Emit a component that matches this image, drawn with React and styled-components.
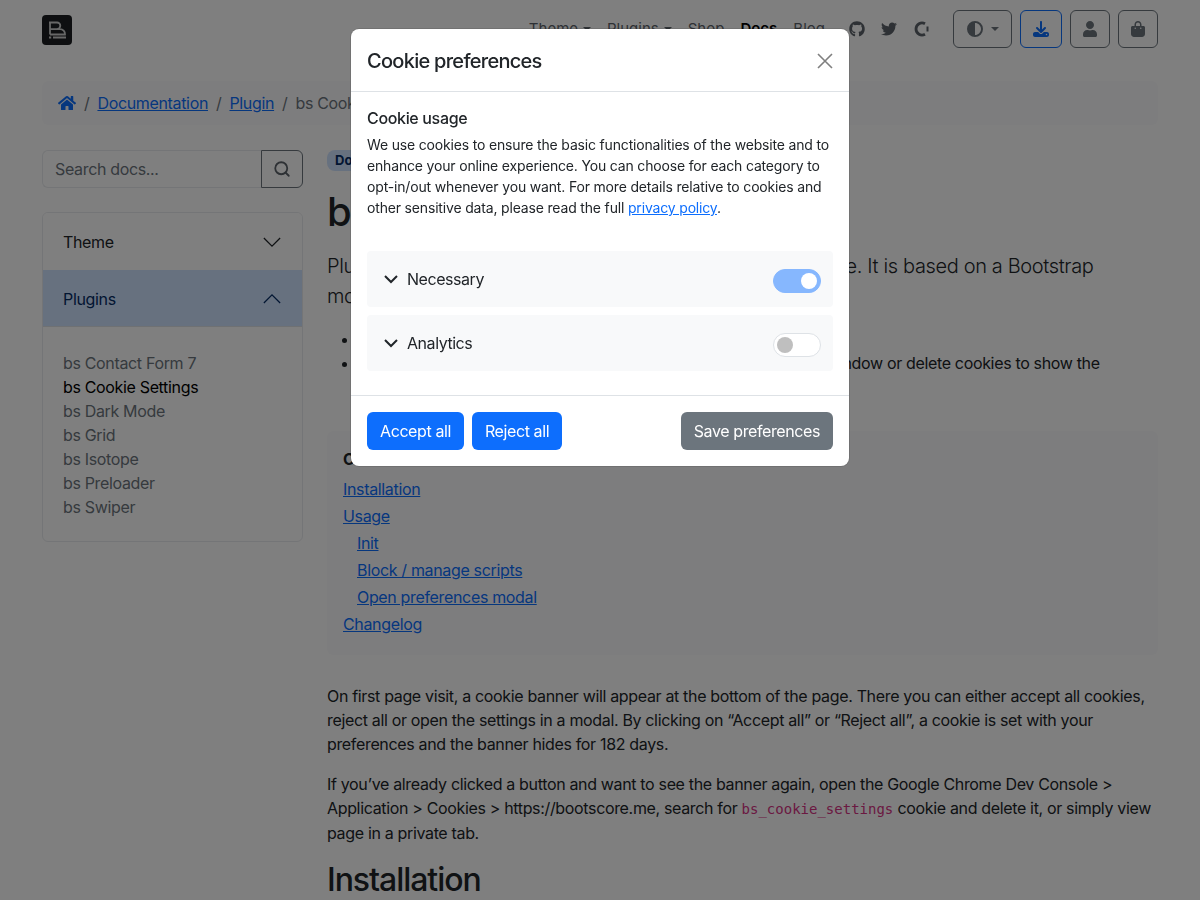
import React from 'react'
import styled, { createGlobalStyle } from 'styled-components'
import { FaGithub, FaTwitter, FaUser, FaHome } from 'react-icons/fa'
import { FaBagShopping, FaCircleHalfStroke, FaDownload } from 'react-icons/fa6'
import { Search } from 'lucide-react'

const GlobalStyle = createGlobalStyle`
  * { box-sizing: border-box; }
  html, body { margin: 0; height: 100%; overflow: hidden; }
  body {
    font-family: Inter, "Liberation Sans", sans-serif;
    font-size: 16px;
    line-height: 24px;
    letter-spacing: -0.34px;
    color: #212529;
    background: #fff;
  }
`

const Page = styled.div`
  height: 900px;
  overflow: hidden;
  padding: 0 42px;
`

const Header = styled.header`
  display: flex;
  align-items: center;
  height: 58px;
`

const Logo = styled.svg`
  width: 30px;
  height: 30px;
  margin-top: 2px;
`

const Nav = styled.nav`
  display: flex;
  align-items: center;
  margin-left: auto;
  font-size: 15px;
  letter-spacing: 0;
`

const NavLink = styled.span`
  margin-right: 16px;
  color: ${p => (p.$active ? '#000' : '#5c636a')};
  font-weight: ${p => (p.$active ? 600 : 400)};
  display: inline-flex;
  align-items: center;
  gap: 5px;
`

const Caret = styled.i`
  width: 0;
  height: 0;
  border: 4px solid transparent;
  border-top-color: currentColor;
  border-bottom: 0;
`

const Social = styled.span`
  display: inline-flex;
  font-size: 16px;
  margin-left: ${p => (p.$first ? '8px' : '16px')};
  color: #5c636a;
`

const Actions = styled.div`
  display: flex;
  gap: 8px;
  margin-left: 24px;
`

const IconButton = styled.button`
  display: flex;
  align-items: center;
  justify-content: center;
  gap: 8px;
  width: ${p => p.$w}px;
  height: 38px;
  padding: 0;
  background: transparent;
  border: 1px solid ${p => (p.$blue ? '#0d6efd' : '#6c757d')};
  border-radius: 6px;
  color: ${p => (p.$blue ? '#0d6efd' : '#6c757d')};
  font-size: 16px;
`

const Breadcrumb = styled.div`
  display: flex;
  align-items: center;
  height: 44px;
  margin-top: 23px;
  padding: 0 16px;
  background: #fbfbfc;
  border-radius: 6px;
  color: #6c757d;
`

const Crumb = styled.a`
  color: #0d6efd;
  text-decoration: underline;
  display: inline-flex;
`

const Slash = styled.span`
  margin: 0 8px;
  color: #6c757d;
`

const Layout = styled.div`
  display: grid;
  grid-template-columns: 261px 1fr;
  gap: 24px;
  margin-top: 25px;
`

const SearchBox = styled.div`
  display: flex;
  height: 38px;
`

const SearchInput = styled.div`
  flex: 1;
  display: flex;
  align-items: center;
  padding: 0 12px;
  color: #6c757d;
  background: #fff;
  border: 1px solid #e9ebee;
  border-right: 0;
  border-radius: 6px 0 0 6px;
`

const SearchButton = styled.button`
  width: 42px;
  display: flex;
  align-items: center;
  justify-content: center;
  padding: 0;
  background: transparent;
  border: 1px solid #6c757d;
  border-radius: 0 6px 6px 0;
  color: #5c636a;
`

const Accordion = styled.div`
  margin-top: 24px;
  height: 330px;
  border: 1px solid #e9ebee;
  border-radius: 6px;
  overflow: hidden;
`

const AccordionHead = styled.div`
  display: flex;
  align-items: center;
  justify-content: space-between;
  height: 57px;
  padding: 0 20px;
  color: ${p => (p.$open ? '#052c65' : '#212529')};
  background: ${p => (p.$open ? '#cfe2ff' : '#fff')};
  box-shadow: ${p => (p.$open ? 'inset 0 -1px 0 #dee2e6' : 'none')};
`

const AccordionIcon = styled.svg`
  width: 20px;
  height: 20px;
  fill: none;
  stroke: currentColor;
  stroke-width: 1;
  transform: ${p => (p.$open ? 'rotate(180deg)' : 'none')};
`

const AccordionBody = styled.ul`
  list-style: none;
  margin: 0;
  padding: 24px 20px;
`

const SideItem = styled.li`
  color: ${p => (p.$active ? '#000' : '#6c757d')};
`

const Main = styled.main`
  min-width: 0;
`

const Badge = styled.span`
  display: block;
  width: fit-content;
  height: 21px;
  padding: 0 8px;
  font-size: 13px;
  font-weight: 700;
  line-height: 21px;
  letter-spacing: 0;
  color: #052c65;
  background: #cfe2ff;
  border-radius: 8px;
`

const Title = styled.h1`
  margin: 17px 0 15px;
  font-size: 40px;
  line-height: 48px;
  font-weight: 500;
  letter-spacing: -1.2px;
`

const Lead = styled.p`
  margin: 0 0 16px;
  font-size: 20px;
  line-height: 30px;
  font-weight: 300;
  letter-spacing: -0.36px;
`

const Bullets = styled.ul`
  margin: 0 0 16px;
  padding-left: 32px;
`

const TocBox = styled.div`
  margin: 32px 0 29px;
  padding: 16px;
  background: #fbfbfc;
  border-radius: 6px;
`

const TocTitle = styled.div`
  font-weight: 700;
  margin-bottom: 6px;
`

const TocLink = styled.a`
  display: block;
  margin: 0 0 3px ${p => (p.$sub ? '14px' : '0')};
  color: #0d6efd;
  text-decoration: underline;
`

const Para = styled.p`
  margin: 0 0 16px;
`

const Code = styled.code`
  font-family: "DejaVu Sans Mono", "Liberation Mono", monospace;
  font-size: 14px;
  letter-spacing: 0;
  color: #d63384;
`

const Subtitle = styled.h2`
  margin: 0;
  font-size: 32px;
  line-height: 38px;
  font-weight: 500;
  letter-spacing: -1.05px;
`

const Backdrop = styled.div`
  position: fixed;
  inset: 0;
  background: rgba(0, 0, 0, 0.5);
`

const Modal = styled.div`
  position: fixed;
  top: 29px;
  left: 351px;
  width: 498px;
  height: 437px;
  display: flex;
  flex-direction: column;
  background: #fff;
  border-radius: 8px;
  box-shadow: 0 0 0 1px rgba(0, 0, 0, 0.1);
  overflow: hidden;
`

const ModalHeader = styled.div`
  display: flex;
  align-items: center;
  justify-content: space-between;
  height: 63px;
  padding: 1px 16px 0;
  border-bottom: 1px solid #dee2e6;
`

const ModalTitle = styled.h5`
  margin: 0;
  font-size: 20px;
  line-height: 30px;
  font-weight: 500;
  letter-spacing: -0.72px;
`

const CloseIcon = styled.svg`
  width: 16px;
  height: 16px;
`

const ModalBody = styled.div`
  flex: 1;
  padding: 14px 16px 0;
`

const UsageTitle = styled.div`
  font-weight: 500;
  line-height: 24px;
  margin-bottom: 4px;
`

const UsageText = styled.p`
  margin: 0 0 33px;
  font-size: 14px;
  line-height: 21px;
  letter-spacing: -0.17px;
  a {
    color: #0d6efd;
    text-decoration: underline;
  }
`

const ConsentRow = styled.div`
  display: flex;
  align-items: center;
  height: 56px;
  margin-bottom: 8px;
  padding: 0 12px 0 16px;
  background: #f8f9fa;
  border-radius: 4px;
`

const Chevron = styled.svg`
  width: 16px;
  height: 16px;
  margin-right: 8px;
`

const ConsentLabel = styled.span`
  flex: 1;
  letter-spacing: -0.45px;
`

const Switch = styled.span`
  position: relative;
  display: block;
  width: 48px;
  height: 24px;
  margin-top: 4px;
  border-radius: 12px;
  background: ${p => (p.$on ? '#86b7fe' : '#fff')};
  border: 1px solid ${p => (p.$on ? '#86b7fe' : '#dee2e6')};
  &::after {
    content: '';
    position: absolute;
    top: 3px;
    ${p => (p.$on ? 'right: 3px;' : 'left: 3px;')}
    width: 16px;
    height: 16px;
    border-radius: 50%;
    background: ${p => (p.$on ? '#fff' : '#bfbfbf')};
  }
`

const ModalFooter = styled.div`
  display: flex;
  gap: 8px;
  align-items: center;
  height: 71px;
  padding: 0 16px;
  border-top: 1px solid #dee2e6;
`

const FooterButton = styled.button`
  height: 38px;
  padding: 0 13px;
  font: inherit;
  letter-spacing: -0.4px;
  color: #fff;
  background: ${p => (p.$secondary ? '#6c757d' : '#0d6efd')};
  border: 0;
  border-radius: 6px;
  margin-left: ${p => (p.$secondary ? 'auto' : '0')};
`

const sideItems = ['bs Contact Form 7', 'bs Cookie Settings', 'bs Dark Mode', 'bs Grid', 'bs Isotope', 'bs Preloader', 'bs Swiper']

export default function App() {
  return (
    <>
      <GlobalStyle />
      <Page>
        <Header>
          <Logo viewBox="0 0 30 30">
            <rect width="30" height="30" rx="4" fill="#1c1f23" />
            <path d="M7 7.500H15a3.300 3.300 0 0 1 0 6.600H8M8 7V19.500M15 14.100h3a5 5 0 0 1 5 5.400H8" fill="none" stroke="#cfcfcf" strokeWidth="1.800" />
            <rect x="7" y="21.500" width="2.200" height="2" fill="#cfcfcf" />
            <rect x="11" y="21.500" width="13" height="2" fill="#cfcfcf" />
          </Logo>
          <Nav>
            <NavLink>Theme <Caret /></NavLink>
            <NavLink>Plugins <Caret /></NavLink>
            <NavLink>Shop</NavLink>
            <NavLink $active>Docs</NavLink>
            <NavLink>Blog</NavLink>
            <Social $first><FaGithub /></Social>
            <Social><FaTwitter /></Social>
            <Social>
              <svg width="16" height="16" viewBox="0 0 16 16">
                <path d="M12 2.800A6 6 0 1 0 12 13.200" fill="none" stroke="currentColor" strokeWidth="2.800" />
                <rect x="13.500" y="5.500" width="2" height="5" fill="currentColor" />
              </svg>
            </Social>
          </Nav>
          <Actions>
            <IconButton $w={59}><FaCircleHalfStroke /><Caret /></IconButton>
            <IconButton $w={42} $blue><FaDownload /></IconButton>
            <IconButton $w={40}><FaUser /></IconButton>
            <IconButton $w={40}><FaBagShopping /></IconButton>
          </Actions>
        </Header>
        <Breadcrumb>
          <Crumb><FaHome size={18} /></Crumb>
          <Slash>/</Slash>
          <Crumb>Documentation</Crumb>
          <Slash>/</Slash>
          <Crumb>Plugin</Crumb>
          <Slash>/</Slash>
          <span>bs Cookie Settings</span>
        </Breadcrumb>
        <Layout>
          <aside>
            <SearchBox>
              <SearchInput>Search docs...</SearchInput>
              <SearchButton><Search size={18} strokeWidth={2.4} /></SearchButton>
            </SearchBox>
            <Accordion>
              <AccordionHead>
                Theme
                <AccordionIcon viewBox="0 0 16 16"><path d="M1.500 4.800L8 11.300l6.500-6.500" /></AccordionIcon>
              </AccordionHead>
              <AccordionHead $open>
                Plugins
                <AccordionIcon $open viewBox="0 0 16 16"><path d="M1.500 4.800L8 11.300l6.500-6.500" /></AccordionIcon>
              </AccordionHead>
              <AccordionBody>
                {sideItems.map(item => (
                  <SideItem key={item} $active={item === 'bs Cookie Settings'}>{item}</SideItem>
                ))}
              </AccordionBody>
            </Accordion>
          </aside>
          <Main>
            <Badge>Docs</Badge>
            <Title>bs Cookie Settings</Title>
            <Lead>Plugin to show a cookie banner and the modal in your store. It is based on a Bootstrap<br />modal and toast.</Lead>
            <Bullets>
              <li>Requires Bootstrap 5 and bootScore</li>
              <li>Already accepted all cookies? Simply open up a private browser window or delete cookies to show the<br />banner again.</li>
            </Bullets>
            <TocBox>
              <TocTitle>Contents</TocTitle>
              <TocLink>Installation</TocLink>
              <TocLink>Usage</TocLink>
              <TocLink $sub>Init</TocLink>
              <TocLink $sub>Block / manage scripts</TocLink>
              <TocLink $sub>Open preferences modal</TocLink>
              <TocLink>Changelog</TocLink>
            </TocBox>
            <Para>On first page visit, a cookie banner will appear at the bottom of the page. There you can either accept all cookies, reject all or open the settings in a modal. By clicking on “Accept all” or “Reject all”, a cookie is set with your preferences and the banner hides for 182 days.</Para>
            <Para>If you’ve already clicked a button and want to see the banner again, open the Google Chrome Dev Console &gt; Application &gt; Cookies &gt; https://bootscore.me, search for <Code>bs_cookie_settings</Code> cookie and delete it, or simply view page in a private tab.</Para>
            <Subtitle>Installation</Subtitle>
          </Main>
        </Layout>
      </Page>
      <Backdrop />
      <Modal>
        <ModalHeader>
          <ModalTitle>Cookie preferences</ModalTitle>
          <CloseIcon viewBox="0 0 16 16">
            <path d="M1 1l14 14M15 1L1 15" stroke="#7f7f7f" strokeWidth="1.600" fill="none" />
          </CloseIcon>
        </ModalHeader>
        <ModalBody>
          <UsageTitle>Cookie usage</UsageTitle>
          <UsageText>
            We use cookies to ensure the basic functionalities of the website and to enhance your online experience. You can choose for each category to opt-in/out whenever you want. For more details relative to cookies and other sensitive data, please read the full <a>privacy policy</a>.
          </UsageText>
          <ConsentRow>
            <Chevron viewBox="0 0 16 16"><path d="M2 5l6 6 6-6" fill="none" stroke="#212529" strokeWidth="2" /></Chevron>
            <ConsentLabel>Necessary</ConsentLabel>
            <Switch $on />
          </ConsentRow>
          <ConsentRow>
            <Chevron viewBox="0 0 16 16"><path d="M2 5l6 6 6-6" fill="none" stroke="#212529" strokeWidth="2" /></Chevron>
            <ConsentLabel>Analytics</ConsentLabel>
            <Switch />
          </ConsentRow>
        </ModalBody>
        <ModalFooter>
          <FooterButton>Accept all</FooterButton>
          <FooterButton>Reject all</FooterButton>
          <FooterButton $secondary>Save preferences</FooterButton>
        </ModalFooter>
      </Modal>
    </>
  )
}
